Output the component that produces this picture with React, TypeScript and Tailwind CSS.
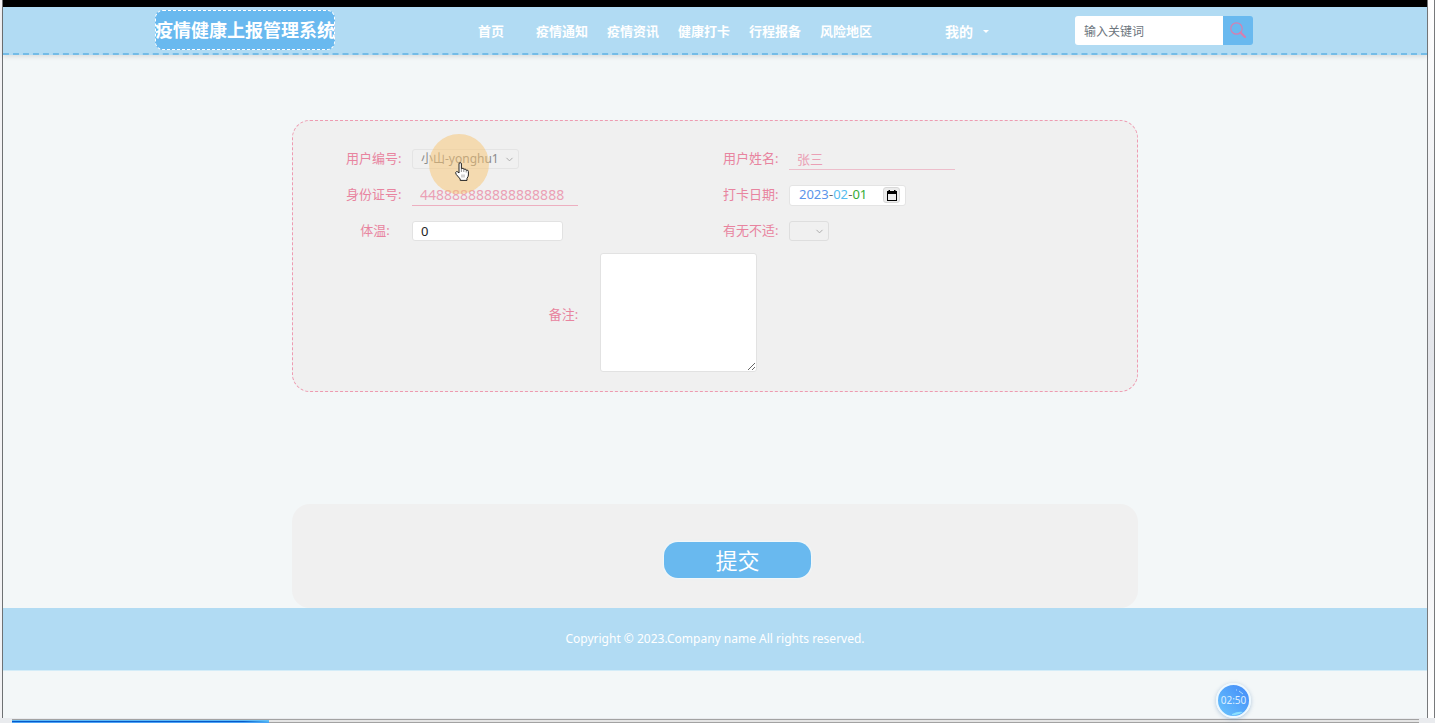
import { useState } from "react";
import type { ReactNode } from "react";
import { ChevronDown } from "lucide-react";

const links = ["疫情通知", "疫情资讯", "健康打卡", "行程报备", "风险地区"];

function Field({
  id,
  label,
  short,
  children,
}: {
  id: string;
  label: string;
  short?: boolean;
  children: ReactNode;
}) {
  return (
    <div className="flex h-5 items-center gap-2">
      <label
        htmlFor={id}
        className={`w-[58px] shrink-0 whitespace-nowrap text-[13px] text-[#e8849f] ${
          short ? "text-center" : ""
        }`}
      >
        {label}:
      </label>
      {children}
    </div>
  );
}

function SearchIcon() {
  return (
    <svg viewBox="0 0 16 16" className="size-4" fill="none" stroke="#d67fb0">
      <circle cx="6.5" cy="6.5" r="5.700" strokeWidth="1.200" />
      <path d="M10.6 10.600 15 15" strokeWidth="2.200" strokeLinecap="round" />
    </svg>
  );
}

function CalendarIcon() {
  return (
    <svg viewBox="0 0 10 11" className="h-[11px] w-[10px]" fill="#000">
      <path d="M0 1h1.5V0H3v1h4V0h1.500v1H10v10H0zM1 4v6h8V4z" fillRule="evenodd" />
    </svg>
  );
}

function Hand() {
  return (
    <svg
      viewBox="0 0 14 19"
      className="absolute top-[28px] left-[26px] h-[19px] w-[14px]"
      fill="#fff"
      stroke="#222"
      strokeWidth="1"
      strokeLinejoin="round"
    >
      <path d="M4 11V2Q4 .6 5.200 .6T6.400 2v4.500Q8.800 5.600 8.800 7.200 11 6.500 11.200 8.200 13.400 7.600 13.400 9.600V13q0 1.500-1.400 3.300V18.400H5.200V17L1.200 12.400Q-.2 10 1.600 9.600 2.800 9.500 4 11Z" />
      <path d="M6.400 6.500v3.500M8.800 7.200V10M11.200 8.200V10.500" strokeWidth=".5" />
      <path d="M7 12.500v3M9 12.500v3" strokeWidth=".4" />
    </svg>
  );
}

function Header() {
  const [word, setWord] = useState("");

  return (
    <header className="relative h-12 border-b-2 border-dashed border-[#74bce7] bg-[#b1dbf3] shadow-[0_2px_4px_rgba(0,0,0,0.1)]">
      <div className="mx-auto flex h-full w-full max-w-[1120px] items-center pr-[22px]">
        <h1 className="flex h-10 w-[180px] shrink-0 items-center justify-center rounded-[8px] border border-dashed border-white bg-[#69b9ef] text-[18px] font-bold whitespace-nowrap text-white">
          疫情健康上报管理系统
        </h1>
        <nav className="ml-[143px] flex items-center pt-[3px] text-[13px] font-bold whitespace-nowrap text-white">
          <a href="#home" className="mr-8">
            首页
          </a>
          <div className="flex gap-[19px]">
            {links.map((item) => (
              <a key={item} href={`#${item}`}>
                {item}
              </a>
            ))}
          </div>
          <button
            type="button"
            className="ml-[73px] flex items-center gap-[10px] text-[14px] font-bold"
          >
            我的
            <span className="border-x-[3px] border-t-[3px] border-x-transparent border-t-white" />
          </button>
        </nav>
        {/* buscador */}
        <form className="ml-auto flex h-[29px]">
          <input
            aria-label="搜索"
            placeholder="输入关键词"
            value={word}
            onChange={(e) => setWord(e.target.value)}
            className="w-[148px] rounded-l-[3px] bg-white px-[9px] pt-1 text-[12px] text-[#495057] outline-none placeholder:text-[#6c757d]"
          />
          <button
            type="button"
            aria-label="搜索"
            className="grid w-[30px] place-items-center rounded-r-[3px] bg-[#69b9ef]"
          >
            <SearchIcon />
          </button>
        </form>
      </div>
    </header>
  );
}

function ReportForm() {
  const [temp, setTemp] = useState("0");
  const [note, setNote] = useState("");

  return (
    <form className="mx-auto w-full max-w-[846px]">
      <div className="mt-[65px] rounded-[18px] border border-dashed border-[#ee9bb1] bg-[#f0f0f0] pt-7 pb-[19px]">
        <div className="grid grid-cols-2 gap-y-4 pr-[37px] pl-[53px]">
          <Field id="user" label="用户编号">
            <div className="relative flex items-center">
              <select
                id="user"
                disabled
                className="h-5 w-[107px] appearance-none rounded-[3px] border border-[#e4e4e4] pl-2 text-[12px] leading-[18px] text-[#8a8a8a] opacity-100"
              >
                <option>小山-yonghu1</option>
              </select>
              <ChevronDown className="absolute right-1 size-[11px] text-[#a5a5a5]" />
              {/* puntero */}
              <div className="pointer-events-none absolute top-[-15px] left-[17px] size-[60px] rounded-full bg-[#f8c470]/50">
                <Hand />
              </div>
            </div>
          </Field>
          <Field id="name" label="用户姓名">
            <input
              id="name"
              readOnly
              value="张三"
              className="h-[21px] w-[166px] border-b border-[#edbecb] px-2 text-[13px] text-[#eba0b5] outline-none"
            />
          </Field>
          <Field id="card" label="身份证号">
            <input
              id="card"
              readOnly
              value="448888888888888888"
              className="h-[21px] w-[166px] border-b border-[#edafc0] px-2 text-[14px] text-[#eba0b5] outline-none"
            />
          </Field>
          <Field id="year" label="打卡日期">
            <div className="flex h-[21px] w-[117px] items-center rounded-[3px] border border-[#e4e4e4] bg-white pl-[9px] text-[13px] text-[#666]">
              <input
                id="year"
                defaultValue="2023"
                className="w-[30px] text-[#5b95ea] outline-none"
              />
              -
              <input
                aria-label="月"
                defaultValue="02"
                className="w-[15px] text-[#56bdf0] outline-none"
              />
              -
              <input
                aria-label="日"
                defaultValue="01"
                className="w-[15px] text-[#35ac35] outline-none"
              />
              <button
                type="button"
                aria-label="选择日期"
                className="mr-[5px] ml-auto grid h-4 w-[17px] place-items-center rounded-[3px] border border-[#d8d8d8] bg-[#ececec]"
              >
                <CalendarIcon />
              </button>
            </div>
          </Field>
          <Field id="temp" label="体温" short>
            <input
              id="temp"
              value={temp}
              onChange={(e) => setTemp(e.target.value)}
              className="h-5 w-[151px] rounded-[3px] border border-[#e2e2e2] bg-white px-2 text-[13px] text-[#222] outline-none"
            />
          </Field>
          <Field id="unwell" label="有无不适">
            <div className="relative flex items-center">
              <select
                id="unwell"
                disabled
                className="h-5 w-10 appearance-none rounded-[3px] border border-[#dedede] opacity-100"
              />
              <ChevronDown className="absolute right-1 size-[11px] text-[#a5a5a5]" />
            </div>
          </Field>
        </div>
        <div className="mt-3 flex items-center justify-center gap-[22px] pr-[124px]">
          <label htmlFor="note" className="pt-1 text-[13px] text-[#e8849f]">
            备注:
          </label>
          <textarea
            id="note"
            value={note}
            onChange={(e) => setNote(e.target.value)}
            className="block h-[119px] w-[157px] rounded-[3px] border border-[#e2e2e2] bg-white p-2 text-[13px] outline-none"
          />
        </div>
      </div>

      {/* submit */}
      <div className="mt-28 flex h-[104px] items-center justify-center rounded-[18px] bg-[#f0f0f0] pt-2 pl-[45px]">
        <button
          type="button"
          className="h-9 w-[147px] rounded-[14px] bg-[#69b9ef] text-[22px] leading-9 text-white shadow-[0_0_2px_1px_rgba(240,249,253,0.9)]"
        >
          提交
        </button>
      </div>
    </form>
  );
}

function App() {
  return (
    <div className="flex min-h-screen flex-col bg-[#f3f7f8] font-['Noto_Sans','Noto_Sans_CJK_SC',sans-serif]">
      <div className="flex flex-1">
        <div className="w-[3px] shrink-0 border-r border-[#6e7173] bg-[#f3f3f5]" />
        <main className="relative min-w-0 flex-1">
          <div className="h-[7px] bg-black" />
          <Header />
          <ReportForm />
          <footer className="h-[63px] border-b border-[#d3ecf8] bg-[#b1dbf3] text-center text-[12px] leading-[62px] text-white">
            Copyright © 2023.Company name All rights reserved.
          </footer>
          {/* tiempo de grabacion */}
          <div className="absolute right-[176px] bottom-0 grid size-[35px] place-items-center rounded-full border-2 border-[#edf8ff] bg-linear-to-tr from-[#6bc4fc] to-[#4389f8] text-[10px] text-[#dceeff] shadow-[0_1px_4px_rgba(80,130,180,0.4)]">
            02:50
            <svg
              viewBox="0 0 31 31"
              className="absolute size-[31px]"
              fill="none"
              stroke="#a9dcff"
              strokeWidth="1"
            >
              <path d="M18 5h1M21 6l4 3" />
              <path d="M14 29q6-3 11-2-5 4-11 3Z" fill="#8ce0ff" stroke="none" />
            </svg>
          </div>
        </main>
        <div className="w-2 shrink-0 border-r border-l border-[#77797b] bg-linear-to-b from-white via-[#e3e5ea] to-white" />
      </div>
      {/* barra de progreso */}
      <div className="flex h-[5px] bg-[#e9ebee] pr-4 pl-3">
        <div className="mt-px h-1 flex-1 border-y border-[#a2a2a2] bg-[#e4e4e4]">
          <div className="h-[3px] w-[257px] border-y border-t-[#62bdf8] border-b-[#4aa3f5] bg-linear-to-r from-[#0758c9] from-90% to-[#53bdf5]" />
        </div>
      </div>
    </div>
  );
}

export default App;
